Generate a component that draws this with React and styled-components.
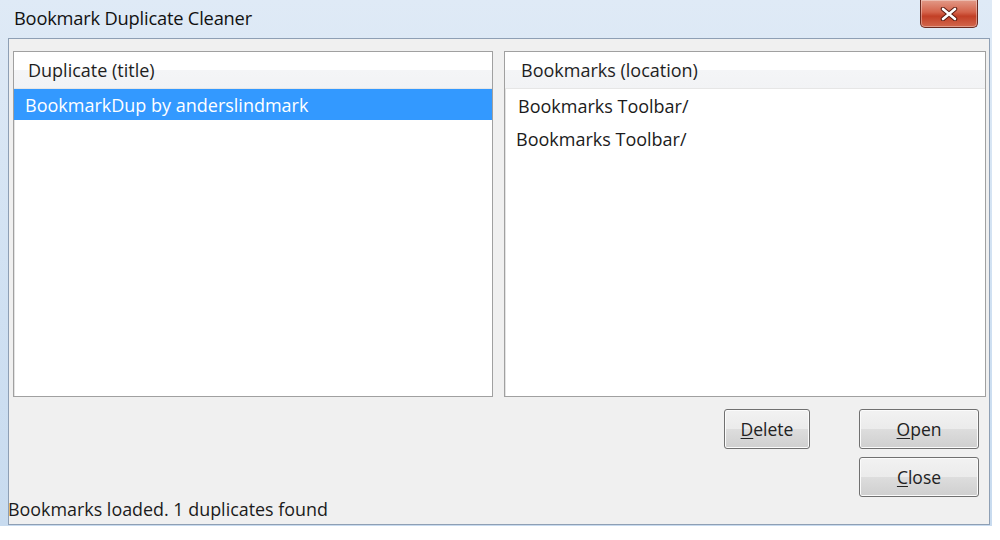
import React from 'react';
import styled, { createGlobalStyle } from 'styled-components';

const GlobalStyle = createGlobalStyle`
  html, body {
    margin: 0;
    padding: 0;
    background: #ffffff;
  }
  body {
    font-family: "Open Sans", "Noto Sans", "Liberation Sans", sans-serif;
    color: #1b1b1b;
  }
`;

const Window = styled.div`
  width: 992px;
  height: 526px;
  display: flex;
  flex-direction: column;
  background: linear-gradient(to bottom, #dfeaf6 0%, #cfe0f2 60%, #c8dbef 100%);
`;

const TitleBar = styled.div`
  height: 38px;
  display: flex;
  justify-content: space-between;
  align-items: flex-start;
  padding-left: 14px;
  padding-right: 14px;
  flex-shrink: 0;
`;

const Title = styled.div`
  font-size: 18.3px;
  line-height: 36px;
  color: #111;
  letter-spacing: -0.2px;
`;

const CloseButton = styled.div`
  width: 56px;
  height: 27px;
  border: 1px solid #6b2a20;
  border-top: none;
  border-radius: 0 0 5px 5px;
  background: linear-gradient(to bottom, #e29a88 0%, #d4634b 45%, #c23f26 60%, #d2674c 100%);
  display: flex;
  align-items: center;
  justify-content: center;
  box-shadow: inset 0 0 0 1px rgba(255, 255, 255, 0.35);
`;

const Frame = styled.div`
  flex: 1;
  display: flex;
  padding: 0 2px 1px 8px;
`;

const Content = styled.div`
  flex: 1;
  display: flex;
  flex-direction: column;
  background: #f0f0f0;
  border: 1px solid #8e9fb4;
  padding: 12px 2px 5px 4px;
`;

const Lists = styled.div`
  display: grid;
  grid-template-columns: 480px 482px;
  column-gap: 11px;
  height: 346px;
`;

const ListView = styled.div`
  background: #ffffff;
  border: 1px solid #a0a0a0;
  box-shadow: inset 1px 1px 0 #e3e3e3;
  display: flex;
  flex-direction: column;
`;

const Header = styled.div`
  height: 36px;
  display: flex;
  align-items: center;
  padding-left: ${p => p.indent}px;
  font-size: 18px;
  color: #1e1e1e;
  background: linear-gradient(to bottom, #ffffff 0%, #ffffff 50%, #f4f5f7 51%, #f2f3f5 100%);
  border-bottom: 1px solid #e6e6e6;
`;

const Row = styled.div`
  height: ${p => p.h}px;
  display: flex;
  align-items: center;
  padding-left: ${p => p.indent}px;
  font-size: 18px;
  background: ${p => (p.selected ? '#3399ff' : 'transparent')};
  color: ${p => (p.selected ? '#ffffff' : '#1b1b1b')};
`;

const Buttons = styled.div`
  align-self: flex-end;
  margin-top: 12px;
  margin-right: 8px;
  display: grid;
  grid-template-columns: 86px 120px;
  grid-template-rows: 40px 40px;
  column-gap: 49px;
  row-gap: 8px;
`;

const Button = styled.button`
  grid-column: ${p => p.col};
  grid-row: ${p => p.row};
  font-family: inherit;
  font-size: 17.5px;
  color: #222;
  border: 1px solid #707070;
  border-radius: 3px;
  background: linear-gradient(to bottom, #f2f2f2 0%, #ebebeb 50%, #dddddd 51%, #cfcfcf 100%);
  box-shadow: inset 0 0 0 1px #fbfbfb;
  padding: 0;
  cursor: default;

  u {
    text-decoration-thickness: 1px;
    text-underline-offset: 2px;
  }
`;

const Status = styled.div`
  font-size: 17.9px;
  line-height: 20px;
  margin-left: -5px;
  margin-top: auto;
  color: #1b1b1b;
`;

export default function App() {
  return (
    <>
      <GlobalStyle />
      <Window>
        <TitleBar>
          <Title>Bookmark Duplicate Cleaner</Title>
          <CloseButton>
            <svg width="18" height="14" viewBox="0 0 18 14">
              <path d="M3 2 L15 12 M15 2 L3 12" stroke="#5a1a10" strokeWidth="4.5" strokeLinecap="round" />
              <path d="M3 2 L15 12 M15 2 L3 12" stroke="#ffffff" strokeWidth="2.6" strokeLinecap="round" />
            </svg>
          </CloseButton>
        </TitleBar>
        <Frame>
          <Content>
            <Lists>
              <ListView>
                <Header indent={14}>Duplicate (title)</Header>
                <Row h={31} indent={11} selected>BookmarkDup by anderslindmark</Row>
              </ListView>
              <ListView>
                <Header indent={16}>Bookmarks (location)</Header>
                <Row h={33} indent={13}>Bookmarks Toolbar/</Row>
                <Row h={33} indent={11}>Bookmarks Toolbar/</Row>
              </ListView>
            </Lists>
            <Buttons>
              <Button col={1} row={1}><u>D</u>elete</Button>
              <Button col={2} row={1}><u>O</u>pen</Button>
              <Button col={2} row={2}><u>C</u>lose</Button>
            </Buttons>
            <Status>Bookmarks loaded. 1 duplicates found</Status>
          </Content>
        </Frame>
      </Window>
    </>
  );
}
